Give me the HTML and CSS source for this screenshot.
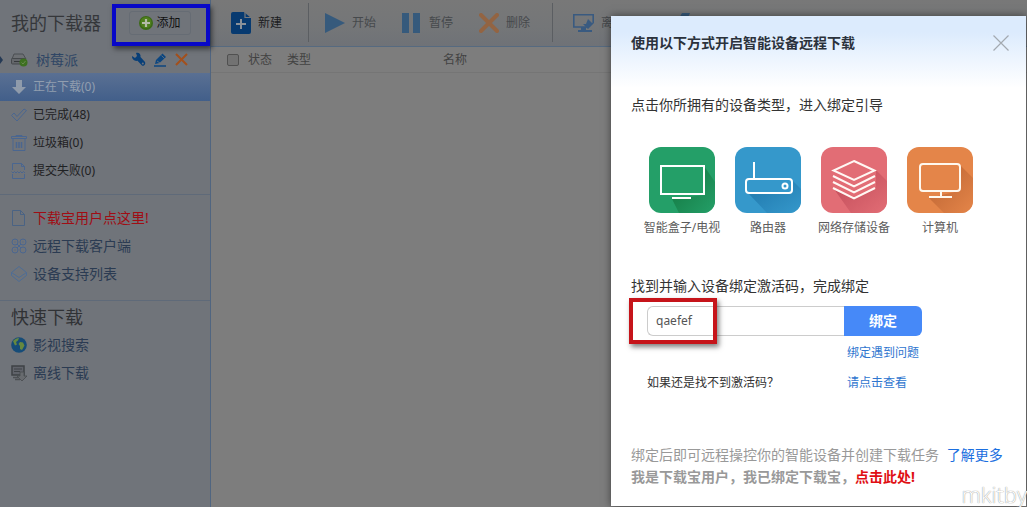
FILE: index.html
```html
<!DOCTYPE html>
<html lang="zh-CN">
<head>
<meta charset="utf-8">
<title>我的下载器</title>
<link rel="stylesheet" href="styles.css">
</head>
<body>
<div class="app">
  <aside class="sidebar">
    <header class="side-head">
      <h1 class="side-title">我的下载器</h1>
      <div class="callout callout-blue">
        <button class="add-btn" type="button">
          <svg width="14" height="14" viewBox="0 0 14 14"><circle cx="7" cy="7" r="7" fill="#3c6a17"/><circle cx="7" cy="6.500" r="5.500" fill="#4f7f1e"/><path d="M7 3v8M3 7h8" stroke="#b4bba8" stroke-width="2.200"/></svg>
          添加
        </button>
      </div>
    </header>
    <div class="device">
      <svg class="arrow" width="4" height="8" viewBox="0 0 4 8"><path d="M0 0l3 4-3 4z" fill="#253a55"/></svg>
      <svg width="17" height="15" viewBox="0 0 17 15"><path d="M3 2h9l3 5H1z" fill="#6d7074" stroke="#4b4e52"/><rect x=".5" y="6.500" width="14" height="5.500" rx="1" fill="#64676b" stroke="#45484c"/><path d="M3 9.500h6" stroke="#35383b"/><circle cx="12.500" cy="10.500" r="4" fill="#3d7020"/><path d="M10.500 10.500l1.500 1.500 2.500-3" fill="none" stroke="#698a50"/></svg>
      <span class="device-name">树莓派</span>
      <button class="tool" type="button" aria-label="设置"><svg width="15" height="15" viewBox="0 0 15 15"><path d="M1 4l3 2 2-2-1-3c3-1 5 1 4.500 4L14 10c1 2-1 4.500-3 3.500L6.500 8.800C3.500 9.500.8 7 1 4z" fill="#083f78"/><circle cx="11.800" cy="11.500" r="1" fill="#70747a"/></svg></button>
      <button class="tool" type="button" aria-label="编辑"><svg width="13" height="14" viewBox="0 0 13 14"><path d="M1 11l1-4 6.500-6.500L12 4 5.500 10z" fill="#0c4680"/><path d="M3 8l3 2M7.500 2.500l3 3" stroke="#70747a" stroke-width=".8"/><path d="M0 13h12" stroke="#0c4680" stroke-width="1.500"/></svg></button>
      <button class="tool" type="button" aria-label="删除"><svg width="13" height="13" viewBox="0 0 13 13"><path d="M1 1l11 11M12 1L1 12" stroke="#a3501c" stroke-width="2"/></svg></button>
    </div>
    <nav class="side-nav">
      <a class="row active" href="#"><svg width="16" height="16" viewBox="0 0 16 16"><path d="M5 1h6v7h4l-7 7-7-7h4z" fill="#8f9bab"/></svg><span>正在下载(0)</span></a>
      <a class="row" href="#"><svg width="16" height="16" viewBox="0 0 16 16"><path d="M.5 8.500L3 6l3 3.500L13 2l2.500 1.500L6 14z" fill="none" stroke="#4a6690"/></svg><span>已完成(48)</span></a>
      <a class="row" href="#"><svg width="16" height="16" viewBox="0 0 16 16"><path d="M.5 3.500V1.500h15v2zM2 4v11.500h12V4M5 1.500V.5h6v1" fill="none" stroke="#4a6690"/><path d="M5.500 7v6M8 7v6M10.500 7v6" stroke="#4a6690" stroke-width="1.500"/></svg><span>垃圾箱(0)</span></a>
      <a class="row" href="#"><svg width="16" height="16" viewBox="0 0 16 16"><path d="M1.500 7V.5h9l3 3V7M10.500.5v3h3M1.500 11v4.500h12V11" fill="none" stroke="#4a6690"/><path d="M.5 8.500l1.500 1.500 1.500-1.500L5 10l1.500-1.500L8 10l1.500-1.500L11 10l1.500-1.500L14 10" fill="none" stroke="#4a6690"/></svg><span>提交失败(0)</span></a>
    </nav>
    <nav class="side-nav links">
      <a class="row alert" href="#"><svg width="16" height="16" viewBox="0 0 16 16"><path d="M1.500.5h8l4 4v11h-12zM9.500.5v4h4" fill="none" stroke="#4a6384"/></svg><span>下载宝用户点这里!</span></a>
      <a class="row" href="#"><svg width="16" height="16" viewBox="0 0 16 16" fill="none" stroke="#4a6690"><circle cx="4" cy="4" r="3"/><circle cx="12" cy="4" r="3"/><circle cx="4" cy="12" r="3"/><circle cx="12" cy="12" r="3"/><path d="M6 6l4 4M10 6l-4 4M4 3.500v1M12 3.500v1M4 11.500v1"/></svg><span>远程下载客户端</span></a>
      <a class="row" href="#"><svg width="16" height="16" viewBox="0 0 16 16" fill="none" stroke="#4e6d95"><path d="M8 .5l7.500 6L8 11.500.5 6.500z"/><path d="M.5 6.500V9.500L8 15.500l7.500-6V6.500"/></svg><span>设备支持列表</span></a>
    </nav>
    <nav class="side-nav quick">
      <h2 class="quick-title">快速下载</h2>
      <a class="row" href="#"><svg width="16" height="16" viewBox="0 0 16 16"><circle cx="8" cy="8" r="7.800" fill="#164c78"/><path d="M2 4c2-2 4-3 6-3L7 3.500 5 5l1 2.500-2 1zM9 5l3 .5 1.500 3L11 13l-2-1V9L7.500 7z" fill="#66883f"/></svg><span>影视搜索</span></a>
      <a class="row" href="#"><svg width="16" height="16" viewBox="0 0 16 16"><rect x="1" y="1" width="12" height="9" fill="#60636a" stroke="#3e4246" stroke-width="1.500"/><path d="M3 4h8M3 6.500h6" stroke="#3e4246"/><path d="M2 12.500h7M4 14.500h5" stroke="#4d5054" stroke-width="1.500"/><path d="M9 7h4v4h3l-5 5-5-5h3z" fill="#686b6f" stroke="#484b4f" stroke-width=".8"/></svg><span>离线下载</span></a>
    </nav>
  </aside>
  <main class="main">
    <div class="toolbar">
      <div class="group">
        <button class="tb strong" type="button"><svg width="20" height="22" viewBox="0 0 20 22"><path d="M2 0h11l7 6v14a2 2 0 0 1-2 2H2a2 2 0 0 1-2-2V2a2 2 0 0 1 2-2z" fill="#073a70"/><path d="M14 0v5.500h6" fill="none" stroke="#77797c" stroke-width="1.200"/><path d="M10 7v10M5 12h10" stroke="#8b9299" stroke-width="2"/></svg><span>新建</span></button>
      </div>
      <div class="group">
        <button class="tb" type="button"><svg width="20" height="20" viewBox="0 0 20 20"><path d="M0 0l20 10L0 20z" fill="#365a7c"/></svg><span>开始</span></button>
        <button class="tb" type="button"><svg width="20" height="20" viewBox="0 0 20 20"><path d="M0 0h7v20H0zM11 0h7v20h-7z" fill="#365a7c"/></svg><span>暂停</span></button>
        <button class="tb" type="button"><svg width="20" height="20" viewBox="0 0 20 20"><path d="M2 2l16 16M18 2L2 18" stroke="#936442" stroke-width="4" stroke-linecap="round"/></svg><span>删除</span></button>
      </div>
      <div class="group">
        <button class="tb" type="button"><svg width="21" height="20" viewBox="0 0 21 20"><path d="M14 14H.8V1.800h19.400V10" fill="none" stroke="#395a80" stroke-width="1.600"/><path d="M8 14h5v3h6v2H5v-2h3z" fill="#395a80"/><path d="M15 6l4 4h2l-6 6-5-5h3z" fill="#395a80"/></svg><span>离线</span></button>
        <button class="tb" type="button" aria-label="加速"><svg width="20" height="20" viewBox="0 0 20 20"><path d="M7 0h8l-3 7h5L3 20l4-9H1z" fill="#365a7c"/></svg></button>
      </div>
    </div>
    <table class="tasks">
      <thead>
        <tr>
          <th class="col-check"><input class="check" type="checkbox" aria-label="全选"></th>
          <th class="col-state">状态</th>
          <th class="col-type">类型</th>
          <th>名称</th>
        </tr>
      </thead>
    </table>
  </main>
</div>

<section class="dialog" role="dialog" aria-labelledby="dlg-title">
  <header class="dlg-head">
    <h2 class="dlg-title" id="dlg-title">使用以下方式开启智能设备远程下载</h2>
    <button class="close" type="button" aria-label="关闭"><svg width="16" height="16" viewBox="0 0 16 16"><path d="M.5.5l15 15M15.500.5l-15 15" stroke="#a3a9b0" stroke-width="1.200"/></svg></button>
  </header>
  <div class="dlg-body">
    <p class="lead">点击你所拥有的设备类型，进入绑定引导</p>
    <div class="types">
      <a class="type" href="#">
        <svg class="tile" viewBox="0 0 66 66"><defs><linearGradient id="g1" x1="0" y1="0" x2="1" y2="1"><stop offset=".3" stop-color="#178049"/><stop offset="1" stop-color="#249f68"/></linearGradient></defs><rect width="66" height="66" rx="12" fill="#249f68"/><path d="M55 19l11 16v19a12 12 0 0 1-12 12H30L23 52l32-4z" fill="url(#g1)"/><rect x="12" y="19" width="43" height="28" fill="#249f68" stroke="#fff" stroke-width="2"/><path d="M23 51h19" stroke="#fff" stroke-width="2"/></svg>
        <span>智能盒子/电视</span>
      </a>
      <a class="type" href="#">
        <svg class="tile" viewBox="0 0 66 66"><defs><linearGradient id="g2" x1="0" y1="0" x2="1" y2="1"><stop offset=".3" stop-color="#2580b4"/><stop offset="1" stop-color="#3598cb"/></linearGradient></defs><rect width="66" height="66" rx="12" fill="#3598cb"/><path d="M57 33l9 9v12a12 12 0 0 1-12 12H32L13 46h43z" fill="url(#g2)"/><rect x="11" y="32" width="46" height="14" rx="3" fill="#3598cb" stroke="#fff" stroke-width="2"/><path d="M19 32V15" stroke="#fff" stroke-width="2"/><circle cx="50" cy="39" r="2.500" fill="none" stroke="#fff" stroke-width="2"/></svg>
        <span>路由器</span>
      </a>
      <a class="type" href="#">
        <svg class="tile" viewBox="0 0 66 66"><defs><linearGradient id="g3" x1="0" y1="0" x2="1" y2="1"><stop offset=".3" stop-color="#c95460"/><stop offset="1" stop-color="#e26d75"/></linearGradient></defs><rect width="66" height="66" rx="12" fill="#e26d75"/><path d="M55 23l11 11v20a12 12 0 0 1-12 12H30L13 42l20 10 22-11z" fill="url(#g3)"/><g fill="none" stroke="#fff8f4" stroke-width="2"><path d="M33 14l20.500 9.500L33 33l-20.500-9.500z"/><path d="M12 29l21 10.500L54 29M12 35l21 10.500L54 35M12 41l21 10.500L54 41"/></g></svg>
        <span>网络存储设备</span>
      </a>
      <a class="type" href="#">
        <svg class="tile" viewBox="0 0 66 66"><defs><linearGradient id="g4" x1="0" y1="0" x2="1" y2="1"><stop offset=".3" stop-color="#c66c38"/><stop offset="1" stop-color="#e48549"/></linearGradient></defs><rect width="66" height="66" rx="12" fill="#e48549"/><path d="M53 18l13 13v23a12 12 0 0 1-12 12H37L22 51l30-7z" fill="url(#g4)"/><rect x="13" y="17" width="40" height="27" rx="3" fill="#e48549" stroke="#fff8ee" stroke-width="2"/><path d="M34 44v6M22 50h23" stroke="#fff8ee" stroke-width="2"/></svg>
        <span>计算机</span>
      </a>
    </div>
    <form class="bind">
      <label class="lead" for="code">找到并输入设备绑定激活码，完成绑定</label>
      <div class="field">
        <input class="code" id="code" type="text" value="qaefef">
        <button class="submit" type="button">绑定</button>
        <div class="callout callout-red"></div>
      </div>
      <div class="help">
        <a class="help-link" href="#">绑定遇到问题</a>
        <span>如果还是找不到激活码？</span>
        <a class="help-link" href="#">请点击查看</a>
      </div>
    </form>
    <footer class="dlg-foot">
      <p>绑定后即可远程操控你的智能设备并创建下载任务 <a class="more" href="#">了解更多</a></p>
      <p class="bold">我是下载宝用户，我已绑定下载宝，<a class="here" href="#">点击此处!</a></p>
    </footer>
  </div>
</section>
<div class="watermark">mkitby</div>
<script src="main.js"></script>
</body>
</html>
```
FILE: main.js
```js
const code = document.getElementById("code");
code.focus();
code.setSelectionRange(code.value.length, code.value.length);
```
FILE: styles.css
```css
* { box-sizing: border-box; }

body {
  margin: 0;
  overflow: hidden;
  background: #7d7d7d;
  font-family: "Noto Sans", "Noto Sans CJK SC", sans-serif;
  font-size: 12px;
  line-height: 20px;
}

h1, h2, p { margin: 0; font-weight: 400; }
a { color: inherit; text-decoration: none; }
svg { display: block; flex: none; }

button {
  margin: 0;
  padding: 0;
  border: 0;
  background: none;
  color: inherit;
  font: inherit;
}

.app { display: flex; min-height: 100vh; }

.sidebar {
  flex: none;
  width: 211px;
  border-right: 1px solid #506580;
  background: #70747a;
}

.side-head {
  display: flex;
  align-items: center;
  justify-content: space-between;
  height: 46px;
  padding-left: 11px;
}

.side-title { color: #35373a; font-size: 18px; line-height: 24px; }

.callout { border: 4px solid; box-shadow: 2px 3px 5px rgba(0, 0, 0, .5); }

.callout-blue {
  position: relative;
  align-self: flex-end;
  width: 98px;
  padding: 3px 13px;
  border-color: #0808c8;
}

.add-btn {
  display: flex;
  align-items: center;
  justify-content: center;
  gap: 3px;
  width: 62px;
  height: 24px;
  margin-bottom: 4px;
  border: 1px solid #666c74;
  border-radius: 3px;
  color: #111;
}

.device {
  display: flex;
  align-items: center;
  gap: 8px;
  height: 27px;
  padding-right: 22px;
  color: #2f4665;
}

.arrow { margin-right: -1px; }
.device-name { flex: 1; font-size: 14px; }

.row {
  display: flex;
  align-items: center;
  gap: 6px;
  height: 28px;
  padding-left: 11px;
  color: #1f2123;
}

.active {
  background: linear-gradient(#5a7093, #425f8a);
  color: #919eaf;
}

.links, .quick { border-top: 1px solid #5f6a79; }
.links { margin-top: 9px; padding: 9px 0 12px; }
.links .row, .quick .row { color: #2b3b52; font-size: 14px; }
.links .alert { color: #a00d14; }
.quick-title {
  padding: 4px 0 2px 11px;
  color: #303235;
  font-size: 18px;
  line-height: 24px;
}

.main { flex: 1; min-width: 0; }

.toolbar {
  display: flex;
  height: 47px;
  padding-bottom: 4px;
  border-bottom: 1px solid #566a80;
  background: linear-gradient(#787878, #747678 60%, #6f7277);
  color: #46494c;
}

.group {
  display: flex;
  gap: 26px;
  margin-top: 3px;
  padding: 0 22px 0 20px;
  border-right: 1px solid #5b5e62;
}

.group:first-child { padding-right: 26px; }
.group:nth-child(2) { padding-left: 16px; }
.group:last-child { gap: 50px; border: 0; }
.tb { display: flex; align-items: center; gap: 7px; }
.strong { color: #1c1d1f; }

.tasks { width: 100%; border-collapse: collapse; table-layout: fixed; }

.tasks th {
  height: 25px;
  padding: 1px 0 0;
  border-bottom: 1px solid #757575;
  color: #424242;
  font-weight: 400;
  text-align: left;
}

.tasks .col-check { width: 37px; padding-left: 16px; }
.col-state { width: 39px; }
.col-type { width: 156px; }

.check {
  display: block;
  appearance: none;
  width: 12px;
  height: 12px;
  margin: 0;
  border: 1px solid #505050;
  border-radius: 2px;
  background: #727272;
}

.dialog {
  position: absolute;
  top: 16px;
  right: 1px;
  bottom: 1px;
  width: 415px;
  background: linear-gradient(#dcebfd, #dcebfd 16px, #fff 72px);
  box-shadow: 0 0 8px rgba(0, 0, 0, .5);
  color: #333;
}

.dlg-head {
  display: flex;
  align-items: center;
  justify-content: space-between;
  height: 54px;
  padding: 0 17px 0 20px;
}

.dlg-title { color: #2b323c; font-size: 14px; font-weight: 700; }
.dlg-body { padding: 25px 20px 0; }
.lead { display: block; font-size: 14px; }

.types {
  display: grid;
  grid-template-columns: repeat(4, 86px);
  margin: 32px 0 38px 8px;
}

.type {
  display: flex;
  flex-direction: column;
  align-items: center;
  gap: 5px;
  color: #5c5c5c;
  white-space: nowrap;
}

.tile { width: 66px; height: 66px; }

.field { position: relative; display: flex; height: 30px; margin: 10px 0 7px 16px; }

.code {
  width: 197px;
  padding: 0 8px;
  border: 1px solid #ccc;
  border-right: 0;
  border-radius: 6px 0 0 6px;
  outline: 0;
  color: #555;
  font: inherit;
}

.submit {
  width: 78px;
  border-radius: 0 6px 6px 0;
  background: #4689f8;
  color: #fff;
  font-size: 14px;
  font-weight: 700;
}

.callout-red {
  position: absolute;
  top: -8px;
  left: -18px;
  width: 88px;
  height: 46px;
  border-color: #c6141a;
  pointer-events: none;
}

.help {
  display: grid;
  grid-template-columns: 200px 1fr;
  row-gap: 10px;
  margin-left: 16px;
}

.help-link { grid-column: 2; color: #2f76cf; }

.dlg-foot {
  margin-top: 51px;
  color: #999;
  font-size: 14px;
  line-height: 22px;
  white-space: nowrap;
}

.more { margin-left: 4px; color: #1b6fe0; }
.bold { font-weight: 700; }
.here { color: #e00f14; }

.watermark {
  position: absolute;
  right: 0;
  bottom: 0;
  color: #fff;
  font: 300 22px/26px "Open Sans", sans-serif;
  text-shadow: 0 0 1px #999, 0 0 1px #aaa;
}
```
